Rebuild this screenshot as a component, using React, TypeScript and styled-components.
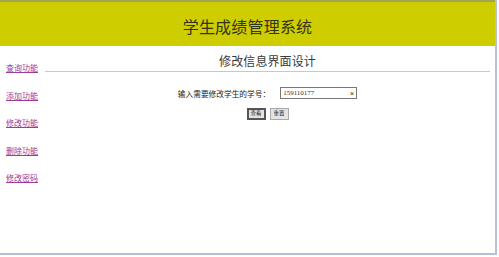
import React from "react";
import styled, { createGlobalStyle } from "styled-components";

const Global = createGlobalStyle`
  html, body { margin: 0; padding: 0; background: #ffffff; }
  body { font-family: "Noto Sans CJK SC", "Noto Sans", sans-serif; }
`;

const Frame = styled.div`
  width: 495px;
  height: 253px;
  border-right: 2px solid #b4c2d6;
  border-bottom: 2px solid #b4c2d6;
  background: #fff;
  display: flex;
  flex-direction: column;
`;

const Header = styled.header`
  height: 44px;
  border-top: 2px solid #a3a35a;
  background: #cdcd00;
  display: flex;
  align-items: center;
  justify-content: center;
`;

const Title = styled.h1`
  margin: 0;
  font-size: 16px;
  font-weight: 400;
  color: #33331a;
  letter-spacing: 0.2px;
  transform: translateY(2px);
`;

const Body = styled.div`
  display: grid;
  grid-template-columns: 45px 1fr;
  flex: 1;
  padding-right: 5px;
`;

const Sidebar = styled.nav`
  display: flex;
  flex-direction: column;
  gap: 15.5px;
  padding: 16px 0 0 6px;
`;

const NavLink = styled.a`
  font-size: 8px;
  line-height: 12px;
  color: #9a3d9a;
  text-decoration: underline;
  white-space: nowrap;
`;

const Main = styled.main`
  display: flex;
  flex-direction: column;
  align-items: center;
`;

const Subtitle = styled.h2`
  margin: 0;
  padding-top: 7px;
  font-size: 12px;
  line-height: 16px;
  font-weight: 400;
  color: #3a3a3a;
  letter-spacing: 0.1px;
`;

const Rule = styled.hr`
  align-self: stretch;
  margin: 2px 0 0 0;
  border: none;
  border-top: 1px solid #c8c8c8;
  height: 0;
`;

const FormRow = styled.div`
  margin-top: 15px;
  display: flex;
  align-items: center;
  gap: 10px;
`;

const Label = styled.label`
  font-size: 7.7px;
  color: #222;
  white-space: nowrap;
`;

const InputBox = styled.div`
  width: 71px;
  height: 10px;
  border: 1px solid #777;
  display: flex;
  align-items: center;
  justify-content: space-between;
  padding: 0 2px;
  font-family: "Liberation Serif", serif;
  font-size: 7px;
  color: #333;
`;

const Clear = styled.span`
  font-family: "Liberation Sans", sans-serif;
  font-size: 7px;
  color: #222;
`;

const ButtonRow = styled.div`
  margin-top: 9px;
  display: flex;
  gap: 4px;
`;

const Button = styled.button<{ $primary?: boolean }>`
  width: 19px;
  height: 12px;
  padding: 0;
  font-family: "Noto Sans CJK SC", sans-serif;
  font-size: 5.5px;
  line-height: 1;
  color: #222;
  background: #e4e4e4;
  border: ${(p) => (p.$primary ? "2px solid #555" : "1px solid #aaa")};
  display: flex;
  align-items: center;
  justify-content: center;
`;

export default function App() {
  return (
    <>
      <Global />
      <Frame>
        <Header>
          <Title>学生成绩管理系统</Title>
        </Header>
        <Body>
          <Sidebar>
            <NavLink href="#">查询功能</NavLink>
            <NavLink href="#">添加功能</NavLink>
            <NavLink href="#">修改功能</NavLink>
            <NavLink href="#">删除功能</NavLink>
            <NavLink href="#">修改密码</NavLink>
          </Sidebar>
          <Main>
            <Subtitle>修改信息界面设计</Subtitle>
            <Rule />
            <FormRow>
              <Label>输入需要修改学生的学号：</Label>
              <InputBox>
                <span>159110177</span>
                <Clear>×</Clear>
              </InputBox>
            </FormRow>
            <ButtonRow>
              <Button $primary>查看</Button>
              <Button>重置</Button>
            </ButtonRow>
          </Main>
        </Body>
      </Frame>
    </>
  );
}
